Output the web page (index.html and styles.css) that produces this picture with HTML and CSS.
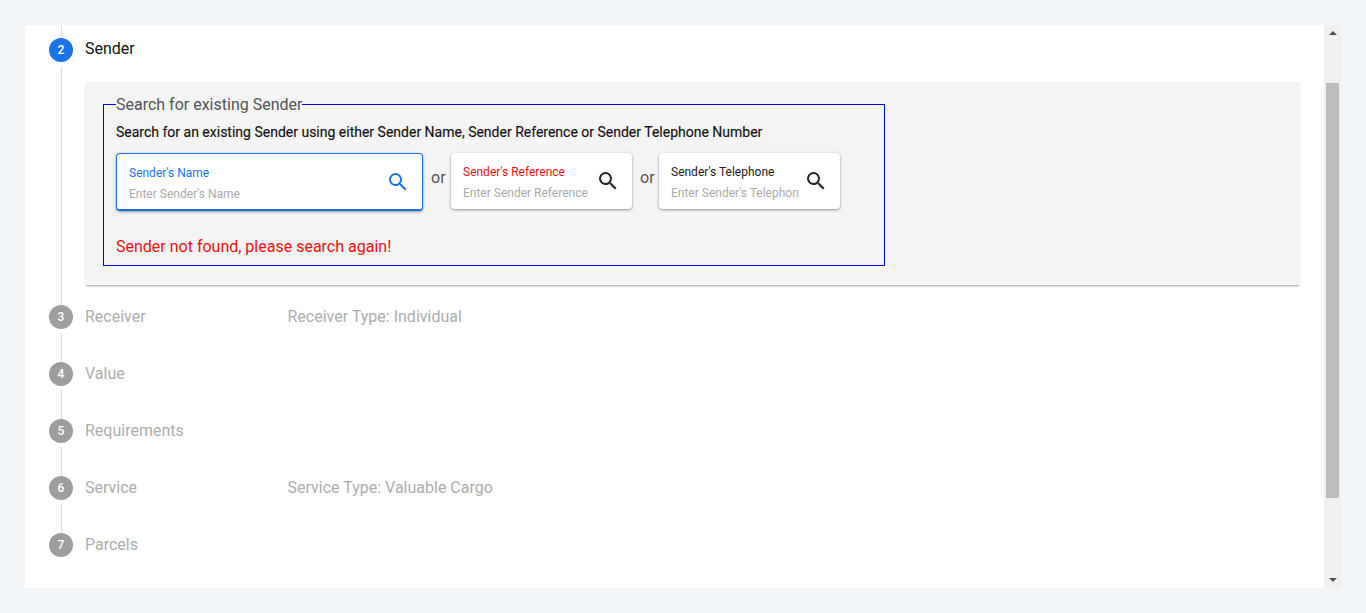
FILE: index.html
```html
<!DOCTYPE html>
<html lang="en">
<head>
    <meta charset="UTF-8">
    <meta name="viewport" content="width=device-width, initial-scale=1.0">
    <title>New Shipment</title>
    <link rel="stylesheet" href="styles.css">
</head>
<body>
    <main class="panel">
        <div class="steps">

            <!-- Active step -->
            <section class="step step-active">
                <div class="rail">
                    <div class="connector connector-top"></div>
                    <div class="badge badge-active">2</div>
                    <div class="connector"></div>
                </div>
                <div class="step-body">
                    <div class="step-head">
                        <span class="step-title title-active">Sender</span>
                    </div>
                    <div class="step-content">
                        <fieldset class="search-box">
                            <legend>Search for existing Sender</legend>
                            <p class="search-help">Search for an existing Sender using either Sender Name, Sender Reference or Sender Telephone Number</p>
                            <div class="search-row">
                                <div class="field field-focus">
                                    <div class="field-text">
                                        <label class="label-blue">Sender's Name</label>
                                        <input type="text" placeholder="Enter Sender's Name">
                                    </div>
                                    <svg class="icon icon-blue" viewBox="0 0 24 24"><path d="M15.5 14h-.79l-.28-.27A6.47 6.47 0 0 0 16 9.5 6.5 6.5 0 1 0 9.5 16c1.61 0 3.09-.59 4.23-1.57l.27.28v.79l5 4.99L20.49 19l-4.99-5zm-6 0C7.01 14 5 11.99 5 9.5S7.01 5 9.5 5 14 7.01 14 9.5 11.99 14 9.5 14z"/></svg>
                                </div>
                                <span class="or">or</span>
                                <div class="field">
                                    <div class="field-text">
                                        <label class="label-red">Sender's Reference</label>
                                        <input type="text" placeholder="Enter Sender Reference">
                                    </div>
                                    <svg class="icon" viewBox="0 0 24 24"><path d="M15.5 14h-.79l-.28-.27A6.47 6.47 0 0 0 16 9.5 6.5 6.5 0 1 0 9.5 16c1.61 0 3.09-.59 4.23-1.57l.27.28v.79l5 4.99L20.49 19l-4.99-5zm-6 0C7.01 14 5 11.99 5 9.5S7.01 5 9.5 5 14 7.01 14 9.5 11.99 14 9.5 14z"/></svg>
                                </div>
                                <span class="or or-narrow">or</span>
                                <div class="field">
                                    <div class="field-text">
                                        <label>Sender's Telephone</label>
                                        <input type="text" placeholder="Enter Sender's Telephone">
                                    </div>
                                    <svg class="icon" viewBox="0 0 24 24"><path d="M15.5 14h-.79l-.28-.27A6.47 6.47 0 0 0 16 9.5 6.5 6.5 0 1 0 9.5 16c1.61 0 3.09-.59 4.23-1.57l.27.28v.79l5 4.99L20.49 19l-4.99-5zm-6 0C7.01 14 5 11.99 5 9.5S7.01 5 9.5 5 14 7.01 14 9.5 11.99 14 9.5 14z"/></svg>
                                </div>
                            </div>
                            <p class="search-error">Sender not found, please search again!</p>
                        </fieldset>
                    </div>
                </div>
            </section>

            <!-- Collapsed steps -->
            <section class="step">
                <div class="rail">
                    <div class="badge">3</div>
                    <div class="connector"></div>
                </div>
                <div class="step-head">
                    <span class="step-title">Receiver</span>
                    <span class="step-note">Receiver Type: Individual</span>
                </div>
            </section>

            <section class="step">
                <div class="rail">
                    <div class="badge">4</div>
                    <div class="connector"></div>
                </div>
                <div class="step-head">
                    <span class="step-title">Value</span>
                </div>
            </section>

            <section class="step">
                <div class="rail">
                    <div class="badge">5</div>
                    <div class="connector"></div>
                </div>
                <div class="step-head">
                    <span class="step-title">Requirements</span>
                </div>
            </section>

            <section class="step">
                <div class="rail">
                    <div class="badge">6</div>
                    <div class="connector"></div>
                </div>
                <div class="step-head">
                    <span class="step-title">Service</span>
                    <span class="step-note">Service Type: Valuable Cargo</span>
                </div>
            </section>

            <section class="step step-last">
                <div class="rail">
                    <div class="badge">7</div>
                </div>
                <div class="step-head">
                    <span class="step-title">Parcels</span>
                </div>
            </section>
        </div>

        <!-- Scrollbar -->
        <div class="scrollbar">
            <div class="arrow-up"></div>
            <div class="scroll-track">
                <div class="scroll-thumb"></div>
            </div>
            <div class="arrow-down"></div>
        </div>
    </main>
</body>
</html>
```

FILE: styles.css
```css
/* General Styles */
* {
    box-sizing: border-box;
}

html, body {
    height: 100%;
}

body {
    font-family: Roboto, "Liberation Sans", sans-serif;
    margin: 0;
    padding: 25px;
    background-color: #f3f6f9;
    overflow: hidden;
}

.panel {
    display: flex;
    width: 1316px;
    height: 563px;
    background-color: #fff;
}

.steps {
    flex: 1;
    min-width: 0;
    padding: 0 24px;
}

/* Step Styles */
.step {
    display: flex;
    gap: 12px;
    height: 57px;
}

.step-active {
    height: 280px;
}

.rail {
    display: flex;
    flex-direction: column;
    align-items: center;
    width: 24px;
    flex-shrink: 0;
}

.connector {
    flex: 1;
    width: 1px;
    margin-top: 4px;
    background-color: #dcdcdc;
}

.connector-top {
    flex: none;
    height: 13px;
    margin-top: 0;
}

.badge {
    display: flex;
    align-items: center;
    justify-content: center;
    width: 24px;
    height: 24px;
    flex-shrink: 0;
    border-radius: 50%;
    background-color: #9e9e9e;
    color: #fff;
    font-size: 12px;
    font-weight: 500;
}

.badge-active {
    background-color: #1a73e8;
}

.step-body {
    flex: 1;
    min-width: 0;
    padding-top: 12px;
}

.step-head {
    display: flex;
    height: 22px;
    align-items: center;
    font-size: 16px;
    color: #adadad;
}

.step-title {
    width: 202.5px;
}

.title-active {
    color: #111;
}

.step-content {
    margin-top: 23px;
    height: 203px;
    padding: 13px 18px 0;
    background-color: #f4f4f4;
    box-shadow: 0 2px 2px -1px rgba(0, 0, 0, 0.4);
}

/* Search Box */
.search-box {
    width: 782px;
    height: 171px;
    margin: 0;
    padding: 0 12px;
    border: 1px solid #0000f0;
}

.search-box legend {
    padding: 0;
    font-size: 16px;
    line-height: 19px;
    color: #555;
}

.search-help {
    margin: 8px 0 0;
    font-size: 14px;
    line-height: 20px;
    color: #111;
    -webkit-text-stroke: 0.15px #111;
}

.search-row {
    display: flex;
    align-items: flex-start;
    margin-top: 11px;
}

.field {
    display: flex;
    align-items: center;
    width: 181px;
    height: 56px;
    padding: 0 12px;
    background-color: #fff;
    border-radius: 4px;
    box-shadow: 0 1px 3px rgba(0, 0, 0, 0.4);
}

.field-focus {
    width: 307px;
    height: 58px;
    border: 1px solid #1a73e8;
    border-bottom-width: 2px;
}

.field-text {
    flex: 1;
    min-width: 0;
    padding-top: 3px;
    padding-right: 5px;
}

.field label {
    display: block;
    font-size: 12px;
    line-height: 14px;
    color: #222;
}

.field .label-blue {
    color: #1a73e8;
}

.field .label-red {
    color: #f01010;
}

.field input {
    display: block;
    width: 100%;
    margin-top: 7px;
    padding: 0;
    border: none;
    outline: none;
    background: transparent;
    font-family: inherit;
    font-size: 12px;
    line-height: 14px;
}

.field input::placeholder {
    color: #aaa;
    opacity: 1;
}

.icon {
    width: 24px;
    height: 24px;
    flex-shrink: 0;
    fill: #222;
}

.icon-blue {
    fill: #1a73e8;
}

.or {
    width: 28px;
    padding-top: 15px;
    padding-left: 8px;
    font-size: 16px;
    line-height: 19px;
    color: #555;
}

.or-narrow {
    width: 27px;
}

.search-error {
    margin: 26px 0 0;
    font-size: 16px;
    line-height: 19px;
    color: #f01010;
}

/* Scrollbar */
.scrollbar {
    display: flex;
    flex-direction: column;
    align-items: center;
    width: 17px;
    background-color: #f0f0f0;
}

.scroll-track {
    flex: 1;
    width: 100%;
    padding: 0 2px;
}

.scroll-thumb {
    height: 415px;
    margin-top: 48px;
    background-color: #bcbcbc;
}

.arrow-up,
.arrow-down {
    width: 0;
    height: 0;
    border-left: 4px solid transparent;
    border-right: 4px solid transparent;
}

.arrow-up {
    margin-top: 6px;
    border-bottom: 4px solid #505050;
}

.arrow-down {
    margin-bottom: 6px;
    border-top: 4px solid #505050;
}
```
